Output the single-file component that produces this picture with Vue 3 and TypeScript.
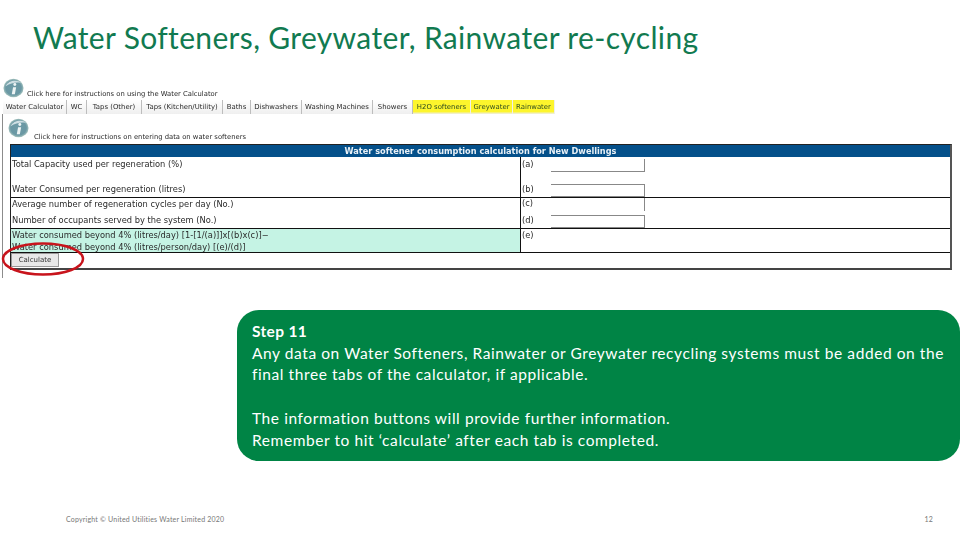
<script setup lang="ts">
const tabs = [
  { label: 'Water Calculator', w: 64 },
  { label: 'WC', w: 20 },
  { label: 'Taps (Other)', w: 55 },
  { label: 'Taps (Kitchen/Utility)', w: 81 },
  { label: 'Baths', w: 28 },
  { label: 'Dishwashers', w: 51 },
  { label: 'Washing Machines', w: 71 },
  { label: 'Showers', w: 40 },
  { label: 'H2O softeners', w: 58, hl: true },
  { label: 'Greywater', w: 42, hl: true },
  { label: 'Rainwater', w: 42, hl: true },
]
</script>

<template>
  <div class="slide">
    <h1 class="title">Water Softeners, Greywater, Rainwater re-cycling</h1>

    <section class="shot">
      <div class="inst first">
        <svg class="info" viewBox="0 0 24 22">
          <defs>
            <radialGradient id="g1" cx="50%" cy="50%" r="55%">
              <stop offset="0" stop-color="#6e9ba6" />
              <stop offset="0.7" stop-color="#6a98a4" />
              <stop offset="1" stop-color="#bcd3c8" />
            </radialGradient>
          </defs>
          <ellipse cx="12" cy="11" rx="11.500" ry="10.500" fill="url(#g1)" />
          <path d="M3 9C6 2 16 1 21 5C15 4 9 5 3 9Z" fill="#cfdfe3" />
          <circle cx="13.500" cy="7" r="1.700" fill="#eef4f4" />
          <path d="M11.500 10L15 10L13.500 18L10 18Z" fill="#eef4f4" />
        </svg>
        <span class="inst-text">Click here for instructions on using the Water Calculator</span>
      </div>

      <div class="tabs">
        <span v-for="t in tabs" :key="t.label" class="tab" :class="{ hl: t.hl }" :style="{ width: t.w + 'px' }">{{ t.label }}</span>
      </div>

      <div class="panel">
        <div class="inst second">
          <svg class="info" viewBox="0 0 24 22">
            <ellipse cx="12" cy="11" rx="11.500" ry="10.500" fill="url(#g1)" />
            <path d="M3 9C6 2 16 1 21 5C15 4 9 5 3 9Z" fill="#cfdfe3" />
            <circle cx="13.500" cy="7" r="1.700" fill="#eef4f4" />
            <path d="M11.500 10L15 10L13.500 18L10 18Z" fill="#eef4f4" />
          </svg>
          <span class="inst-text">Click here for instructions on entering data on water softeners</span>
        </div>

        <div class="table">
          <div class="thead">Water softener consumption calculation for New Dwellings</div>

          <div class="row r1">
            <div class="left">
              <div>Total Capacity used per regeneration (%)</div>
              <div>Water Consumed per regeneration (litres)</div>
            </div>
            <div class="right">
              <div class="field"><span>(a)</span><i class="inp a"></i></div>
              <div class="field"><span>(b)</span><i class="inp b"></i></div>
            </div>
          </div>

          <div class="row r2">
            <div class="left">
              <div>Average number of regeneration cycles per day (No.)</div>
              <div>Number of occupants served by the system (No.)</div>
            </div>
            <div class="right">
              <div class="field"><span>(c)</span><i class="inp c"></i></div>
              <div class="field"><span>(d)</span><i class="inp b"></i></div>
            </div>
          </div>

          <div class="row r3">
            <div class="left mint">
              <div>Water consumed beyond 4% (litres/day) [1-[1/(a)]]x[(b)x(c)]−</div>
              <div>Water consumed beyond 4% (litres/person/day) [(e)/(d)]</div>
            </div>
            <div class="right"><span>(e)</span></div>
          </div>

          <div class="row r4">
            <button class="calc" type="button">Calculate</button>
          </div>

          <svg class="ring" viewBox="0 0 84 34">
            <ellipse cx="42" cy="17" rx="40" ry="15.500" fill="none" stroke="#c8141c" stroke-width="2.500" />
          </svg>
        </div>
      </div>
    </section>

    <aside class="callout">
      <p><strong>Step 11</strong></p>
      <p>Any data on Water Softeners, Rainwater or Greywater recycling systems must be added on the final three tabs of the calculator, if applicable.</p>
      <p class="gap">The information buttons will provide further information.</p>
      <p>Remember to hit ‘calculate’ after each tab is completed.</p>
    </aside>

    <footer class="foot">
      <span>Copyright © United Utilities Water Limited 2020</span>
      <span>12</span>
    </footer>
  </div>
</template>

<style>
html, body { margin: 0; background: #fff; }
</style>

<style scoped>
.slide {
  width: 960px;
  height: 540px;
  overflow: hidden;
  display: flex;
  flex-direction: column;
  background: #fff;
  font-family: Lato, "Liberation Sans", sans-serif;
}
.title {
  margin: 0;
  padding: 19px 0 0 33px;
  height: 56px;
  box-sizing: border-box;
  font-size: 30px;
  line-height: 36px;
  font-weight: 400;
  letter-spacing: 0.35px;
  color: #117a50;
  white-space: nowrap;
}
.shot {
  height: 234px;
  flex: none;
  box-sizing: border-box;
  font-family: "DejaVu Sans", sans-serif;
  color: #2a2a2a;
  font-size: 8px;
  filter: blur(0.4px);
}
.inst {
  display: flex;
  align-items: flex-start;
  box-sizing: border-box;
}
.inst.first { padding: 2px 0 0 3px; margin-top: 20px; height: 24px; }
.inst.second { height: 30px; padding-top: 4px; }
.inst-text { font-size: 6.800px; line-height: 8px; white-space: nowrap; }
.first .inst-text { margin: 12px 0 0 3px; }
.second .inst-text { margin: 15px 0 0 5px; }
.info { width: 21px; height: 20px; flex: none; }
.tabs {
  display: flex;
  align-items: stretch;
  height: 14px;
  padding-left: 3px;
  font-size: 6.900px;
}
.tab {
  display: flex;
  align-items: center;
  justify-content: center;
  white-space: nowrap;
  border-right: 1px solid #bdbdbd;
  background: linear-gradient(#fff, #efefef);
  box-sizing: border-box;
}
.tab.hl {
  background: linear-gradient(#fdf52c 82%, #eee);
  border-right-color: #eee;
  color: #2c4a20;
}
.panel {
  border-left: 1px solid #8c8c8c;
  margin-left: 2px;
  padding-left: 5px;
  height: 164px;
  box-sizing: border-box;
}
.table {
  position: relative;
  margin-left: 2px;
  width: 942px;
  box-sizing: border-box;
  height: 126px;
  border: 1px solid #222;
  border-right: 2px solid #555;
  border-bottom: 2px solid #444;
  display: flex;
  flex-direction: column;
  font-size: 8.300px;
}
.thead {
  height: 12px;
  line-height: 12px;
  background: #04508a;
  color: #e8f0f6;
  font-weight: 700;
  font-size: 8.200px;
  text-align: center;
  flex: none;
}
.row {
  display: flex;
  border-bottom: 1px solid #111;
  box-sizing: border-box;
}
.r1 { height: 41px; }
.r2 { height: 31px; }
.r3 { height: 24px; }
.r4 { flex: 1; border-bottom: 0; }
.left {
  width: 510px;
  flex: none;
  padding-left: 1px;
  border-right: 1px solid #111;
  display: flex;
  flex-direction: column;
  justify-content: space-between;
  box-sizing: border-box;
  white-space: nowrap;
  line-height: 12px;
}
.r1 .left { padding: 1px 0 2px 1px; }
.r2 .left { padding: 0 0 2px 1px; }
.mint { background: #c5f3e4; }
.right {
  flex: 1;
  padding-left: 1px;
  display: flex;
  flex-direction: column;
  justify-content: space-between;
  line-height: 11px;
}
.r1 .right { padding-top: 2px; }
.r3 .right { padding-top: 1px; }
.field { display: flex; height: 13px; align-items: flex-start; }
.field span { width: 29px; flex: none; }
.inp {
  display: block;
  width: 94px;
  height: 13px;
  box-sizing: border-box;
  border-right: 1px solid #888;
}
.inp.a { border-bottom: 1px solid #888; }
.inp.b { border-top: 1px solid #888; border-bottom: 1px solid #888; }
.calc {
  margin: 0;
  width: 48px;
  height: 14px;
  padding: 0;
  border: 1px solid #999;
  background: #e8e8e8;
  font-family: "DejaVu Sans", sans-serif;
  font-size: 7px;
  color: #333;
}
.ring {
  position: absolute;
  left: -10px;
  top: 97px;
  width: 84px;
  height: 34px;
}
.callout {
  margin: 20px 0 0 237px;
  height: 151px;
  flex: none;
  box-sizing: border-box;
  padding: 11px 12px 0 15px;
  background: #008445;
  color: #fff;
  border-radius: 22px;
  font-size: 15.500px;
  letter-spacing: 0.58px;
  line-height: 21.700px;
}
.callout strong { letter-spacing: 0.35px; }
.callout p { margin: 0; }
.callout .gap { margin-top: 21.700px; }
.foot {
  display: flex;
  justify-content: space-between;
  margin-top: 54px;
  padding: 0 27px 0 66px;
  font-size: 7px;
  letter-spacing: 0.2px;
  color: #777;
}
</style>
